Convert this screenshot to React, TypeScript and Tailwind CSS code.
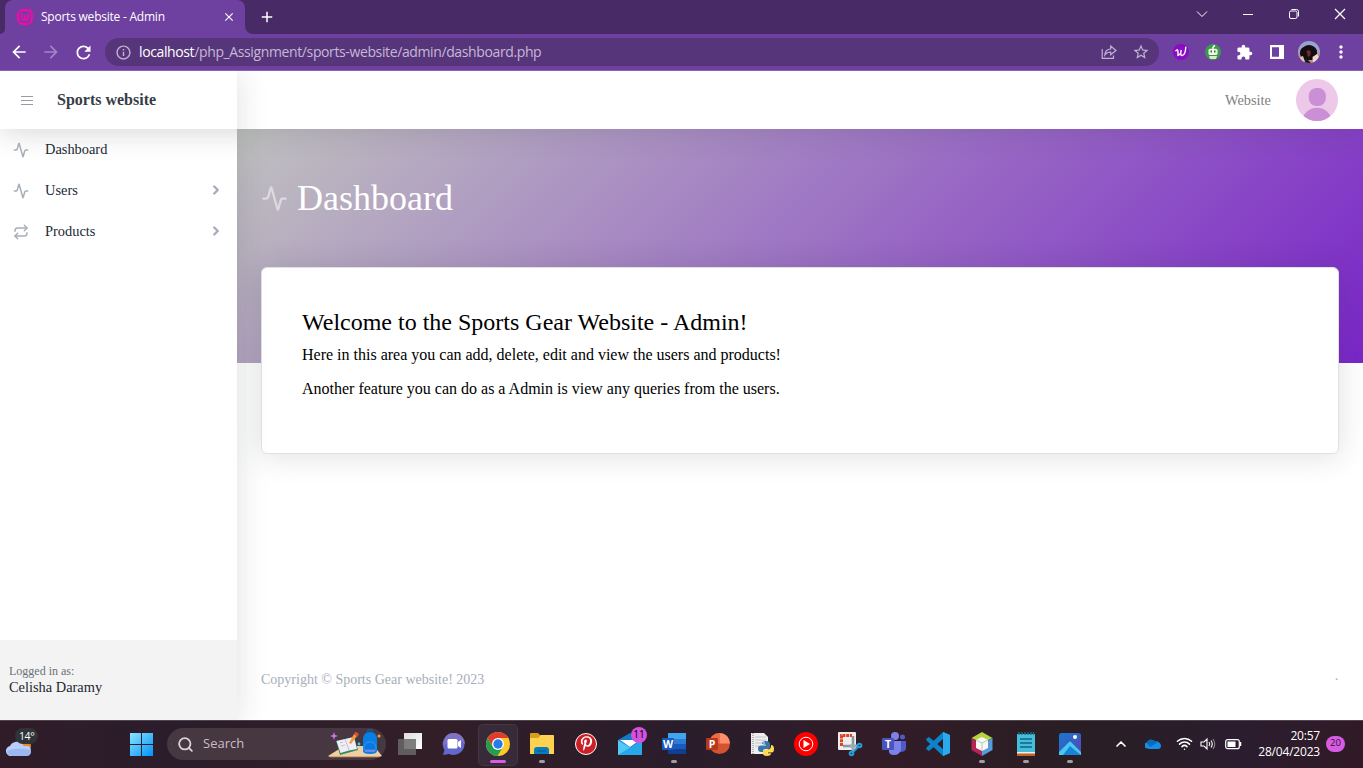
import React from "react";
import { Activity, Repeat, ChevronRight, ChevronUp, Search, Wifi } from "lucide-react";
import { MdArrowBack, MdArrowForward, MdRefresh, MdInfoOutline, MdExtension, MdMoreVert, MdClose, MdAdd, MdStarOutline } from "react-icons/md";
import { FaPinterestP } from "react-icons/fa";

const ui = "font-['Open_Sans','Noto_Sans',sans-serif]";

function TabStrip() {
  return (
    <div className="flex h-[34px] bg-[#472a66] text-white">
      <div className="flex w-[5px] bg-[#6e40a0]"><div className="w-full rounded-br-lg bg-[#472a66]" /></div>
      <div className="flex h-[34px] w-[240px] items-center rounded-t-lg bg-[#6e40a0] pl-3 pr-[9px]">
        <svg width="16" height="16" viewBox="0 0 16 16" className="shrink-0" fill="none" stroke="#f808a8">
          <rect x="1.2" y="1.2" width="13.6" height="13.6" rx="4.5" strokeWidth="2.3" strokeDasharray="10 .6" />
          <path d="M5 4.5V9.5q0 1.5 1.5 1.5T8 9.5V6v3.5q0 1.5 1.5 1.5T11 9.5V4.5" strokeWidth="1.8" />
        </svg>
        <span className="ml-2 grow whitespace-nowrap text-[12px] tracking-[-0.23px]">Sports website - Admin</span>
        <MdClose size={14} />
      </div>
      <div className="flex w-2 bg-[#6e40a0]"><div className="w-full rounded-bl-lg bg-[#472a66]" /></div>
      <div className="flex grow items-center pl-[5px]"><MdAdd size={18} /></div>
      <div className="flex w-[184px] items-center justify-between pb-[6px] pl-[17px] pr-[17px]">
        <svg width="12" height="12" viewBox="0 0 12 12" fill="none" stroke="#fff"><path d="M1 3.5 6 8.5 11 3.5" /></svg>
        <svg width="12" height="12" viewBox="0 0 12 12" stroke="#fff"><path d="M1 6.5H11" /></svg>
        <svg width="12" height="12" viewBox="0 0 12 12" fill="none" stroke="#fff"><rect x="1.5" y="3" width="7.5" height="7.5" rx="1.5" /><path d="M3.5 1.5H8.5Q10.5 1.5 10.5 3.5V8.5" /></svg>
        <svg width="12" height="12" viewBox="0 0 12 12" stroke="#fff" strokeWidth="1.2"><path d="M1 1 11 11M11 1 1 11" /></svg>
      </div>
    </div>
  );
}

function Toolbar() {
  return (
    <div className="flex h-[37px] items-center border-b border-[#8a63b4] bg-[#6e40a0] text-white">
      <MdArrowBack size={20} className="ml-[9px]" />
      <MdArrowForward size={20} className="ml-3 text-[#a385c4]" />
      <MdRefresh size={21} className="ml-[12px]" />
      <div className="ml-[11px] flex h-7 w-[1054px] items-center rounded-full bg-[#56357b] pl-[10px] pr-[9px]">
        <MdInfoOutline size={17} className="text-[#c3b3d3]" />
        <span className="ml-[7px] grow text-[14px] leading-5 tracking-[-0.38px] text-[#c6b8d6]"><span className="text-white">localhost</span>/php_Assignment/sports-website/admin/dashboard.php</span>
        <svg width="16" height="16" viewBox="0 0 16 16" fill="none" stroke="#c3b3d3" strokeWidth="1.2"><path d="M1.2 5V14.3H12.5V11.5M3.8 11Q4.2 5.2 9.7 5V2L15 6.5 9.7 10.8V8Q6 7.8 3.8 11Z" /></svg>
        <MdStarOutline size={18} className="ml-[15px] text-[#c3b3d3]" />
      </div>
      <svg width="16" height="16" viewBox="0 0 16 16" className="ml-[14px]"><circle cx="8" cy="8" r="8" fill="#8d0bc0" /><path d="M2.5 7.2Q4.5 4.8 4.8 6.6T5 11.3Q8 10.8 8.2 6 7 11.4 9 11.6 12.5 11 12.8 2.8" fill="none" stroke="#fff" strokeWidth="1.4" /></svg>
      <svg width="16" height="16" viewBox="0 0 16 16" className="ml-4"><circle cx="8" cy="8" r="8" fill="#3e9750" /><path d="M8 5Q7.5 2.5 10 1.5" stroke="#fff" fill="none" strokeWidth="1.4" /><rect x="3.5" y="4.8" width="9" height="6.2" rx="1.5" fill="#f1f8e4" /><path d="M4 12H12L11 15H5Z" fill="#d5ecc0" /><path d="M5.5 6.5H7V8.5H5.5ZM9 6.5H10.5V8.5H9Z" fill="#26713a" /></svg>
      <MdExtension size={17} className="ml-[15px]" />
      <svg width="14" height="14" viewBox="0 0 14 14" className="ml-[17px]"><path fillRule="evenodd" d="M0 0H14V14H0ZM2 2.3V11.8H9V2.3Z" fill="#fff" /></svg>
      <svg width="22" height="22" viewBox="0 0 22 22" className="ml-[14px]"><defs><clipPath id="person"><circle cx="11" cy="11" r="11" /></clipPath></defs><g clipPath="url(#person)"><rect width="22" height="22" fill="#9aa3cb" /><path d="M0 12H22V22H0Z" fill="#b98f88" /><path d="M3 16Q0 9 5.5 6 11 2 16.5 6 21 10 18 15L14 19H6Z" fill="#160d12" /><path d="M8.5 10Q11 8 13 11L12 15 10 16Z" fill="#6c3027" /><path d="M5 22 8 17 13 22Z" fill="#241718" /><path d="M14.5 16 19 13 21 16 18 22H15Z" fill="#eed8d0" /><path d="M2 16 5 15 7 21H4Z" fill="#d8c5b8" /></g></svg>
      <MdMoreVert size={20} className="ml-[11px]" />
    </div>
  );
}

function NavItem({ label, icon: Icon, more }: { label: string; icon: React.ElementType; more?: boolean }) {
  return (
    <div className="flex h-[41px] items-center pl-[13px] pr-[14px] text-[#212832]">
      <Icon size={16} strokeWidth={2.2} className="text-[#a7aeb8]" />
      <span className="ml-4 grow text-[14.4px]">{label}</span>
      {more && <ChevronRight size={14} strokeWidth={4.2} className="mb-px text-[#a7aeb8]" />}
    </div>
  );
}

function Sidebar() {
  return (
    <aside className="z-20 flex w-[237px] shrink-0 shadow-[0_2px_30px_0_rgba(33,40,50,0.15)]">
      <div className="flex w-full flex-col overflow-hidden bg-white">
        <div className="-mr-12 flex h-[58px] shrink-0 items-center pl-5 text-[#363d47] shadow-[0_2px_30px_0_rgba(33,40,50,0.2)]">
          <svg width="14" height="14" viewBox="0 0 14 14" stroke="#989ca2" strokeWidth="1"><path d="M1 3.5H13M1 7.5H13M1 11.5H13" /></svg>
          <span className="ml-[23px] text-[16px] font-bold">Sports website</span>
        </div>
        <nav className="grow">
          <NavItem label="Dashboard" icon={Activity} />
          <NavItem label="Users" icon={Activity} more />
          <NavItem label="Products" icon={Repeat} more />
        </nav>
        <div className="flex h-20 shrink-0 flex-col justify-center bg-[#f3f3f3] pb-[2px] pl-[9px]">
          <div className="text-[12px] leading-4 text-[#69707a]">Logged in as:</div>
          <div className="text-[14.4px] leading-[17px] text-[#212832]">Celisha Daramy</div>
        </div>
      </div>
    </aside>
  );
}

function Main() {
  return (
    <div className="flex grow flex-col bg-white">
      <header className="z-10 flex h-[58px] shrink-0 items-center justify-end bg-white pr-[25px] shadow-[0_2px_30px_0_rgba(33,40,50,0.15)]">
        <span className="pt-[2px] text-[14.4px] text-[#7f7f7f]">Website</span>
        <svg width="42" height="42" viewBox="0 0 42 42" className="ml-[25px]"><defs><clipPath id="avatar"><circle cx="21" cy="21" r="21" /></clipPath></defs><g clipPath="url(#avatar)"><rect width="42" height="42" fill="#edc8e8" /><rect x="12.8" y="9" width="17" height="18" rx="7.5" fill="#cb8fd6" /><ellipse cx="21" cy="42" rx="14.5" ry="13.2" fill="#cb8fd6" /></g></svg>
      </header>
      <div className="h-[234px] shrink-0 bg-[linear-gradient(135deg,#c0c1bf_0%,#7a26c8_100%)] px-6 pt-[46px]">
        <h1 className="flex items-center text-[36px] leading-[46px] text-white"><Activity size={27} strokeWidth={2} className="mr-[9px] text-white/50" />Dashboard</h1>
      </div>
      <section className="mx-6 -mt-24 h-[187px] shrink-0 rounded-md border border-[#e0e1e3] bg-white px-10 pt-[39px] text-black shadow-[0_2px_30px_0_rgba(33,40,50,0.15)]">
        <h2 className="text-[24px] leading-[30px]">Welcome to the Sports Gear Website - Admin!</h2>
        <p className="mt-[7px] text-[16px] leading-[22px]">Here in this area you can add, delete, edit and view the users and products!</p>
        <p className="mt-3 text-[16px] leading-[22px]">Another feature you can do as a Admin is view any queries from the users.</p>
      </section>
      <footer className="mt-auto flex h-20 items-center justify-between px-6 pb-[2px] text-[14px] text-[#a7aeb8]"><span>Copyright © Sports Gear website! 2023</span><span>·</span></footer>
    </div>
  );
}

function AppSlot({ children, state }: { children: React.ReactNode; state?: "open" | "active" }) {
  return (
    <div className="flex w-11 shrink-0 items-center justify-center">
      <div className={state === "active" ? "flex h-10 w-[38px] flex-col items-center rounded bg-[#382a38] pt-[7px] ring-1 ring-[#453643]" : "flex h-10 w-[38px] flex-col items-center pt-[7px]"}>
        {children}
        {state && <div className={state === "active" ? "mt-1 h-[3px] w-4 shrink-0 rounded-full bg-[#d85be4]" : "mt-1 h-[3px] w-[6px] shrink-0 rounded-full bg-[#a49ba3]"} />}
      </div>
    </div>
  );
}

function Svg({ children }: { children: React.ReactNode }) {
  return <svg width="24" height="24" viewBox="0 0 24 24" className="shrink-0 overflow-visible">{children}</svg>;
}

function Letter({ x, children }: { x: number; children: string }) {
  return <text x={x} y="15.8" fontSize="10.5" fontWeight="700" fill="#fff" textAnchor="middle" fontFamily="Open Sans">{children}</text>;
}

function Taskbar() {
  return (
    <div className={`${ui} flex h-12 border-t border-[#51454d] bg-[linear-gradient(90deg,#301c28,#2b1d2c_12%,#321e27_30%,#2a1d2b_50%,#321c27_65%,#291e24_80%,#2b1d2f_91%,#311a26)] text-white`}>
      <div className="flex w-[125px] shrink-0 items-center pb-[6px] pl-[6px]">
        <svg width="34" height="30" viewBox="0 0 34 30">
          <circle cx="19" cy="19" r="6" fill="#eb8523" />
          <path d="M6 29A5 5 0 0 1 4 19Q5 16 9 15 14 13 18 19 25 18 25 24 25 29 20 29Z" fill="#b8cef8" />
          <path d="M6 29Q1 28 1 24 8 20 25 23 26 29 20 29Z" fill="#87aaf0" opacity=".6" />
          <rect x="9" y="1" width="23" height="16" rx="8" fill="#303436" />
          <text x="13" y="12.5" fontSize="10.5" fill="#fff" fontFamily="Open Sans" letterSpacing="-.4">14°</text>
        </svg>
      </div>
      <div className="flex w-[42px] items-center pl-[5px]">
        <svg width="23" height="23" viewBox="0 0 23 23"><defs><linearGradient id="win" x2="1" y2="1"><stop stopColor="#8be4fd" /><stop offset="1" stopColor="#0092fb" /></linearGradient></defs><path d="M0 0H11V11H0ZM12 0H23V11H12ZM0 12H11V23H0ZM12 12H23V23H12Z" fill="url(#win)" /></svg>
      </div>
      <div className="mt-[7px] flex h-8 w-[219px] shrink-0 items-center rounded-full bg-[#473741] pl-[10px]">
        <Search size={17} strokeWidth={2.5} className="text-[#ddd5db]" />
        <span className="ml-[9px] w-[125px] text-[13px] text-[#c8bfc6]">Search</span>
        <svg width="56" height="28" viewBox="0 0 56 28" className="overflow-visible">
          <path d="M0 26 16 16H46L54 26Z" fill="#f0cfa4" /><path d="M0 26H54L51 27.2H2Z" fill="#d7a573" />
          <path d="M8 11 26 7 30 20 12 25Z" fill="#348c58" /><path d="M8.5 11 17 9 26 7 29 19 21 20.5 12.5 23Z" fill="#f1edf6" /><path d="M17 9 21 20M12 13 15 12M13 16 17 15" stroke="#b5b0c8" strokeWidth=".8" />
          <path d="M21 13 26 4 29 6 23 14Z" fill="#f29a35" /><path d="M26 3 28 2 31 4 29 7Z" fill="#e34b3b" />
          <path d="M35 10Q35 2 42 2T49 10V21Q49 24 42 24T35 21Z" fill="#087fe5" /><path d="M39 3Q39 0 42 0T45 3" fill="none" stroke="#125cab" strokeWidth="1.5" /><path d="M36 17Q37 12 42 12T48 17V20H36Z" fill="#0c75df" stroke="#35aaf5" strokeWidth=".7" /><path d="M37 21H47" stroke="#9c8bea" strokeWidth="1.3" />
          <path d="M6 2 7 5 10 6 7 7 6 10 5 7 2 6 5 5Z" fill="#d374eb" /><circle cx="51" cy="6" r="1.5" fill="#f0a51c" /><circle cx="31" cy="14" r="1.4" fill="#42c9ef" />
        </svg>
      </div>
      <div className="ml-[2px] flex">
        <AppSlot><Svg><defs><linearGradient id="view" x2="1" y2="1"><stop stopColor="#ddd" /><stop offset="1" stopColor="#fff" /></linearGradient></defs><path d="M6 1H24V17H6Z" fill="url(#view)" /><path d="M0 7H18V23H0Z" fill="#686868" opacity=".85" /></Svg></AppSlot>
        <AppSlot><Svg><path d="M12 1A11 11 0 1 1 7 22L1 23 2.5 18A11 11 0 0 1 12 1Z" fill="#6368cc" /><path d="M12 1A11 11 0 0 1 23 12Q12 4 2 14 1 1 12 1Z" fill="#8a78bd" opacity=".7" /><rect x="5.5" y="7" width="10" height="9.5" rx="1.5" fill="#fff" /><path d="M16 10 19 8V16L16 14Z" fill="#fff" /></Svg></AppSlot>
        <AppSlot state="active"><Svg><circle cx="12" cy="12" r="12" fill="#ffc928" /><path d="M1.6 6A12 12 0 0 1 22.4 6H12L7 15Z" fill="#df3c30" /><path d="M1.6 6A12 12 0 0 0 11.5 24L17 15 7 15Z" fill="#249d53" /><circle cx="12" cy="12" r="6" fill="#fff" /><circle cx="12" cy="12" r="4.7" fill="#267ce8" /></Svg></AppSlot>
        <AppSlot state="open"><Svg><path d="M0 2Q0 1 1 1H8L10 3H23Q24 3 24 4V9H0Z" fill="#d99e17" /><path d="M0 6H8L11 3H23Q24 3 24 5V22H0Z" fill="#ffd151" /><path d="M4 22V18Q4 15 7 15H16Q19 15 19 18V22Z" fill="#087dbc" /><path d="M7 19H16" stroke="#055892" /></Svg></AppSlot>
        <AppSlot><div className="mt-[1px] flex h-[22px] w-[22px] items-center justify-center rounded-full border-[1.5px] border-white bg-[#cb2027]"><FaPinterestP size={15} /></div></AppSlot>
        <AppSlot>
          <div className="relative"><Svg><path d="M0 8 12 1 24 8V23H0Z" fill="#1478c9" /><path d="M2 8H22L12 15Z" fill="#fff" /><path d="M0 8 24 23H0Z" fill="#50c9f6" /><path d="M24 8 0 23H24Z" fill="#26a7ea" /></Svg>
            <div className="absolute -top-[5px] left-[13px] flex h-4 w-4 items-center justify-center rounded-full bg-[#d451df] text-[10px] text-black">11</div></div>
        </AppSlot>
        <AppSlot state="open"><Svg><path d="M6 1H24V7H6Z" fill="#41a5ee" /><path d="M6 7H24V12H6Z" fill="#2b7cd3" /><path d="M6 12H24V17H6Z" fill="#185abd" /><path d="M6 17H24V22H6Z" fill="#103f91" /><rect y="6" width="12" height="12" rx="1" fill="#185abd" /><Letter x={6}>W</Letter></Svg></AppSlot>
        <AppSlot><Svg><circle cx="13.5" cy="11.5" r="10.5" fill="#d35230" /><path d="M13.5 1A10.5 10.5 0 0 1 24 11.5H13.5Z" fill="#ff8f6b" /><path d="M13.5 1V11.5H3A10.5 10.5 0 0 1 13.5 1Z" fill="#ed6c47" /><rect y="6" width="12" height="12" rx="1" fill="#b7371c" /><Letter x={6}>P</Letter></Svg></AppSlot>
        <AppSlot><Svg><path d="M1 1H14L18 5V22H1Z" fill="#eee" /><path d="M3 1V22" stroke="#777" strokeDasharray="1 1" /><path d="M5 5H16M5 8H16M5 11H12M5 14H9" stroke="#c4c4c4" /><path d="M12 12Q12 9 16 9T20 12V15Q20 17 17 17H15Q13 17 13 20H11Q8 20 8 16.5T12 13.5H16V12.7Z" fill="#3875a8" /><path d="M21 13Q24 13 24 17T21 20.5H17V21.3H21Q21 24 17 24T13 21.5V20Q13 17.5 15.5 17.5H18Q21 17 21 14Z" fill="#ffda4d" /><circle cx="14" cy="11" r=".8" fill="#fff" /></Svg></AppSlot>
        <AppSlot><Svg><circle cx="12" cy="12" r="12" fill="#f00" /><circle cx="12" cy="12" r="6.8" fill="none" stroke="#fff" /><path d="M9.5 8V16L16 12Z" fill="#fff" /></Svg></AppSlot>
        <AppSlot><Svg><rect width="18" height="18" rx="1" fill="#eee" /><path d="M3.5 14V3.5H14" fill="none" stroke="#dc4424" strokeWidth="3" strokeDasharray="3 .8" /><path d="M15 4V14H5" fill="none" stroke="#8c979f" strokeWidth="2.5" /><path d="M12 14H19M15 12V19" stroke="#a0a8ae" strokeWidth="3" /><circle cx="21.5" cy="13.5" r="1.8" fill="none" stroke="#20a1df" strokeWidth="2" /><circle cx="13.5" cy="21.5" r="1.8" fill="none" stroke="#20a1df" strokeWidth="2" /><path d="M15 20 20 15" stroke="#20a1df" strokeWidth="2" /></Svg></AppSlot>
        <AppSlot><Svg><circle cx="13" cy="4" r="4" fill="#7b83eb" /><circle cx="20.5" cy="5" r="2.5" fill="#5059c9" /><path d="M15 9H24V16Q24 20 18 20Z" fill="#5059c9" /><path d="M8 9H19V17Q18 23 12 23T7 17Z" fill="#7b83eb" /><rect y="6" width="12" height="12" rx="1" fill="#4b53bc" /><Letter x={6}>T</Letter></Svg></AppSlot>
        <AppSlot><Svg><path d="M17 0 24 3V21L17 24 1 9 0 7 3 5 17 17V7L3 19 0 17 1 15Z" fill="#0d83ca" /><path d="M17 0 24 3V21L17 24Z" fill="#2aa9ef" /></Svg></AppSlot>
        <AppSlot state="open"><Svg><path d="M12 0 22.5 6 12 11 1.5 6Z" fill="#b7d33d" /><path d="M1.5 6 12 12V24L1.5 18Z" fill="#b62456" /><path d="M22.5 6 12 12V24L22.5 18Z" fill="#579bdc" /><path d="M12 5 18 8V16L12 19 6 16V8Z" fill="#f7f8f4" /><path d="M6 8 12 11 18 8M12 11V19" stroke="#bbc4c4" fill="none" /></Svg></AppSlot>
        <AppSlot state="open"><Svg><path d="M3 2H21V20H3Z" fill="#46bedb" /><path d="M3 20H21V23H3Z" fill="#eee" /><path d="M3 21.5H21V24H3Z" fill="#bd6424" /><path d="M5 0V3M8 0V3M11 0V3M14 0V3M17 0V3M19.5 0V3" stroke="#137693" strokeWidth="1.3" /><path d="M6 7H18M6 11H18M6 15H18" stroke="#126681" strokeWidth="1.7" /></Svg></AppSlot>
        <AppSlot state="open"><Svg><defs><linearGradient id="photo" x2="1" y2="1"><stop stopColor="#127bd0" /><stop offset="1" stopColor="#5d43b5" /></linearGradient></defs><rect x="1" y="1" width="22" height="22" rx="2.5" fill="url(#photo)" /><path d="M1 20 10 11Q12 8 14 11L23 20V23H1Z" fill="#48c9f3" /><path d="M12 14 18 19 23 23H5Z" fill="#1884d7" /><circle cx="17" cy="5" r="2" fill="#fff" /></Svg></AppSlot>
      </div>
      <div className="ml-[21px] flex grow items-center pb-[2px]">
        <ChevronUp size={16} strokeWidth={2.5} />
        <svg width="16" height="12" viewBox="0 0 16 12" className="ml-4"><path d="M3 10.5A3 3 0 0 1 2 4.5Q4 0 9.5 3 15 3 16 7.5 16 11 13 11H4Z" fill="#178de3" /><path d="M2 5Q4-1 10 3L13 4 5 9Z" fill="#086bc0" /></svg>
        <Wifi size={17} strokeWidth={2.2} className="ml-[15px]" />
        <svg width="17" height="14" viewBox="0 0 17 14" fill="none" stroke="#fff" strokeWidth="1.1" className="ml-[7px]"><path d="M1 5H4L7 2V12L4 9H1ZM9 5Q10.5 7 9 9M11 3.5Q13.5 7 11 10.5" /><path d="M13 2Q16.5 7 13 12" opacity=".45" /></svg>
        <svg width="17" height="12" viewBox="0 0 17 12" className="ml-[8px]"><rect x=".7" y="1.7" width="13.6" height="9" rx="2" fill="none" stroke="#fff" strokeWidth="1.2" /><rect x="2.5" y="3.5" width="8" height="5.5" fill="#fff" /><path d="M15.5 4V8" stroke="#fff" strokeWidth="1.5" /></svg>
        <div className="ml-[13px] w-[65px] whitespace-nowrap text-right text-[12px] leading-4 tracking-[-0.2px]">20:57<br />28/04/2023</div>
        <div className="ml-[6px] flex h-4 w-[19px] items-center justify-center rounded-full bg-[#d85be4] text-[9.5px] text-[#2d1833]">20</div>
      </div>
    </div>
  );
}

export default function App() {
  return (
    <div className="flex h-[768px] w-[1363px] flex-col overflow-hidden bg-white">
      <div className={ui}><TabStrip /><Toolbar /></div>
      <div className="flex h-[649px] shrink-0 overflow-hidden font-['Liberation_Serif',serif]">
        <Sidebar />
        <Main />
      </div>
      <Taskbar />
    </div>
  );
}
